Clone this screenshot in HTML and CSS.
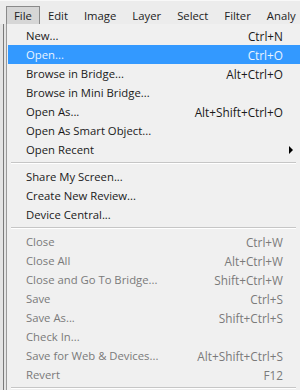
FILE: index.html
```html
<!DOCTYPE html>
<html lang="en">
<head>
    <meta charset="UTF-8">
    <title>File menu</title>
    <link rel="stylesheet" href="styles.css">
</head>
<body>
    <div class="menubar">
        <span class="top-item active">File</span>
        <span class="top-item">Edit</span>
        <span class="top-item">Image</span>
        <span class="top-item">Layer</span>
        <span class="top-item">Select</span>
        <span class="top-item">Filter</span>
        <span class="top-item">Analy</span>
    </div>

    <div class="workspace">
        <div class="gutter"></div>
        <div class="menu">
            <div class="item"><span>New...</span><span class="key">Ctrl+N</span></div>
            <div class="item selected"><span>Open...</span><span class="key">Ctrl+O</span></div>
            <div class="item"><span>Browse in Bridge...</span><span class="key">Alt+Ctrl+O</span></div>
            <div class="item"><span>Browse in Mini Bridge...</span></div>
            <div class="item"><span>Open As...</span><span class="key">Alt+Shift+Ctrl+O</span></div>
            <div class="item"><span>Open As Smart Object...</span></div>
            <div class="item"><span>Open Recent</span><span class="arrow"></span></div>
            <div class="sep"></div>
            <div class="item"><span>Share My Screen...</span></div>
            <div class="item"><span>Create New Review...</span></div>
            <div class="item"><span>Device Central...</span></div>
            <div class="sep"></div>
            <div class="item off"><span>Close</span><span class="key">Ctrl+W</span></div>
            <div class="item off"><span>Close All</span><span class="key">Alt+Ctrl+W</span></div>
            <div class="item off"><span>Close and Go To Bridge...</span><span class="key">Shift+Ctrl+W</span></div>
            <div class="item off"><span>Save</span><span class="key">Ctrl+S</span></div>
            <div class="item off"><span>Save As...</span><span class="key">Shift+Ctrl+S</span></div>
            <div class="item off"><span>Check In...</span></div>
            <div class="item off"><span>Save for Web &amp; Devices...</span><span class="key">Alt+Shift+Ctrl+S</span></div>
            <div class="item off"><span>Revert</span><span class="key">F12</span></div>
            <div class="sep"></div>
        </div>
    </div>
</body>
</html>
```

FILE: styles.css
```css
body {
    margin: 0;
    width: 300px;
    height: 390px;
    overflow: hidden;
    background-color: #f0f0f0;
    font-family: "Open Sans", "Noto Sans", sans-serif;
    font-size: 11.3px;
    color: #1a1a1a;
}
.menubar {
    display: flex;
    height: 24px;
    padding: 5px 0 0 6px;
    box-sizing: border-box;
    background-color: #ececec;
    border-top: 1px solid #f8f8f8;
    white-space: nowrap;
    overflow: hidden;
}
.top-item {
    padding: 0 7px;
    line-height: 17px;
    border: 1px solid transparent;
    border-bottom: none;
    color: #222;
}
.active {
    background-color: #d6d6d6;
    border-color: #8a8a8a;
}
.workspace {
    display: flex;
    height: 366px;
}
.gutter {
    width: 7px;
    background-color: #e4e4e4;
    border-right: 1px solid #9a9a9a;
    box-sizing: border-box;
    position: relative;
}
.gutter::after {
    content: "";
    position: absolute;
    left: 3px;
    top: 0;
    bottom: 0;
    width: 1px;
    background-color: #7a7a7a;
}
.menu {
    flex: 1;
    padding: 2px 0 0 1px;
    background-color: #f0f0f0;
}
.item {
    display: flex;
    justify-content: space-between;
    align-items: center;
    height: 19px;
    padding: 0 17px 0 18px;
    white-space: nowrap;
}
.item .key {
    font-size: 11.8px;
}
.item.selected {
    background-color: #3399ff;
    color: #eaf4ff;
}
.item.off {
    color: #7a7a7a;
}
.arrow {
    width: 0;
    height: 0;
    border-left: 4px solid #000;
    border-top: 4px solid transparent;
    border-bottom: 4px solid transparent;
    margin-right: -10px;
}
.sep {
    height: 0;
    margin: 3px 4px 3px 3px;
    border-top: 1px solid #c6c6c6;
    border-bottom: 1px solid #ffffff;
}
```
